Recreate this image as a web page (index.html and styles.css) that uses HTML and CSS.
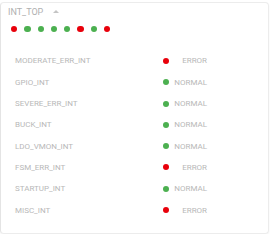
FILE: index.html
```html
<!DOCTYPE html>
<html lang="en">
<head>
  <meta charset="UTF-8" />
  <title>INT_TOP</title>
  <link rel="stylesheet" href="styles.css">
</head>
<body>

  <!-- Interrupt status card -->
  <div class="card">
    <div class="card-head">
      <span class="title">INT_TOP</span>
      <span class="caret"></span>
    </div>

    <div class="summary">
      <span class="dot red"></span>
      <span class="dot green"></span>
      <span class="dot green"></span>
      <span class="dot green"></span>
      <span class="dot green"></span>
      <span class="dot red"></span>
      <span class="dot green"></span>
      <span class="dot red"></span>
    </div>

    <div class="list">
      <div class="row">
        <span class="name">MODERATE_ERR_INT</span>
        <span class="dot red"></span>
        <span class="state">ERROR</span>
      </div>
      <div class="row">
        <span class="name">GPIO_INT</span>
        <span class="dot green"></span>
        <span class="state">NORMAL</span>
      </div>
      <div class="row">
        <span class="name">SEVERE_ERR_INT</span>
        <span class="dot green"></span>
        <span class="state">NORMAL</span>
      </div>
      <div class="row">
        <span class="name">BUCK_INT</span>
        <span class="dot green"></span>
        <span class="state">NORMAL</span>
      </div>
      <div class="row">
        <span class="name">LDO_VMON_INT</span>
        <span class="dot green"></span>
        <span class="state">NORMAL</span>
      </div>
      <div class="row">
        <span class="name">FSM_ERR_INT</span>
        <span class="dot red"></span>
        <span class="state">ERROR</span>
      </div>
      <div class="row">
        <span class="name">STARTUP_INT</span>
        <span class="dot green"></span>
        <span class="state">NORMAL</span>
      </div>
      <div class="row">
        <span class="name">MISC_INT</span>
        <span class="dot red"></span>
        <span class="state">ERROR</span>
      </div>
    </div>
  </div>

</body>
</html>
```

FILE: styles.css
```css
* {
  margin: 0;
  padding: 0;
  box-sizing: border-box;
}

body {
  font-family: Roboto, "Liberation Sans", sans-serif;
  background-color: #fff;
  color: #b8b8b8;
}

/* Card */
.card {
  width: 269px;
  height: 232px;
  margin: 2px 0 0 0;
  border: 1px solid #ececec;
  border-left-color: #e4e4e4;
  border-radius: 4px;
  box-shadow: 0 1px 2px rgba(0,0,0,0.06);
  padding: 2px 0 0 7px;
}

.card-head {
  display: flex;
  align-items: center;
  height: 14px;
}

.title {
  font-size: 9px;
  color: #b0b0b0;
}

.caret {
  margin-left: 10px;
  margin-top: -1px;
  width: 0;
  height: 0;
  border-left: 3.5px solid transparent;
  border-right: 3.5px solid transparent;
  border-bottom: 3.5px solid #c4c4c4;
}

.summary {
  display: flex;
  gap: 7px;
  margin: 7px 0 0 3px;
}

.dot {
  display: inline-block;
  width: 6px;
  height: 6px;
  border-radius: 50%;
  flex-shrink: 0;
}

.summary .dot {
  width: 6.3px;
  height: 6.3px;
}

.red {
  background-color: #e8000b;
}

.green {
  background-color: #4cb050;
}

/* Interrupt list */
.list {
  margin: 18px 0 0 7px;
}

.row {
  display: flex;
  align-items: center;
  height: 21.3px;
  font-size: 8px;
}

.name {
  width: 148px;
}

.state {
  width: 38px;
  text-align: right;
}
```
